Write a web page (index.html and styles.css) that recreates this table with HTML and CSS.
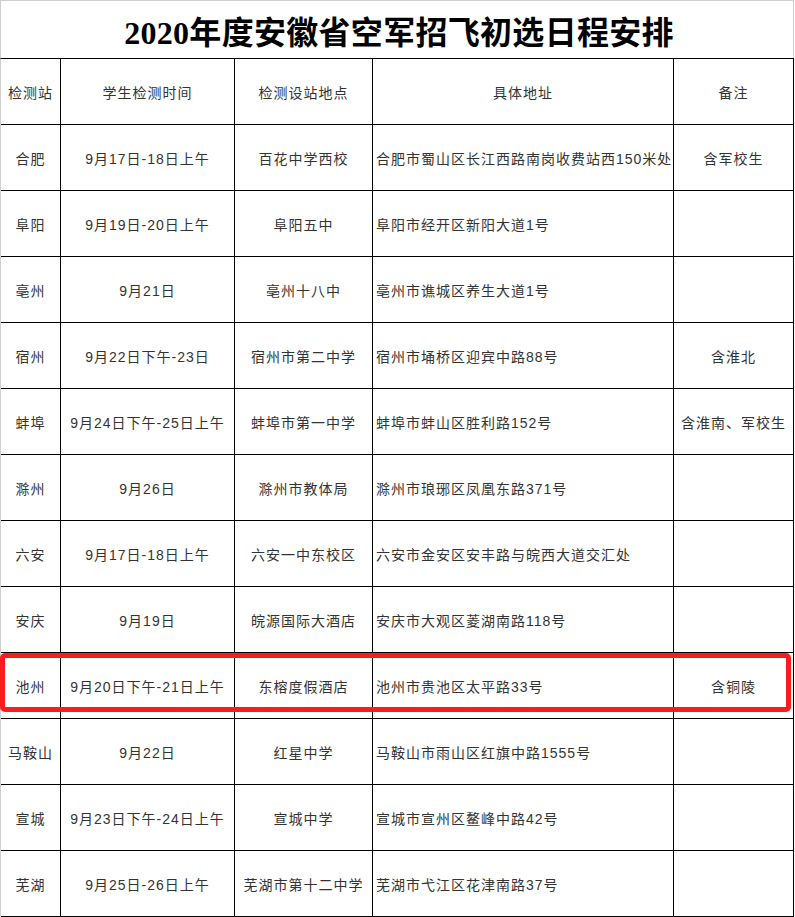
FILE: index.html
```html
<!DOCTYPE html>
<html lang="zh-CN">
<head>
<meta charset="utf-8">
<title>2020年度安徽省空军招飞初选日程安排</title>
<link rel="stylesheet" href="styles.css">
</head>
<body>
<div class="sheet">
  <div class="title">2020年度安徽省空军招飞初选日程安排</div>
  <div class="grid">
    <div class="c">检测站</div><div class="c">学生检测时间</div><div class="c">检测设站地点</div><div class="c">具体地址</div><div class="c">备注</div>

    <div class="c">合肥</div><div class="c">9月17日-18日上午</div><div class="c">百花中学西校</div><div class="c addr">合肥市蜀山区长江西路南岗收费站西150米处</div><div class="c">含军校生</div>

    <div class="c">阜阳</div><div class="c">9月19日-20日上午</div><div class="c">阜阳五中</div><div class="c addr">阜阳市经开区新阳大道1号</div><div class="c"></div>

    <div class="c">亳州</div><div class="c">9月21日</div><div class="c">亳州十八中</div><div class="c addr">亳州市谯城区养生大道1号</div><div class="c"></div>

    <div class="c">宿州</div><div class="c">9月22日下午-23日</div><div class="c">宿州市第二中学</div><div class="c addr">宿州市埇桥区迎宾中路88号</div><div class="c">含淮北</div>

    <div class="c">蚌埠</div><div class="c">9月24日下午-25日上午</div><div class="c">蚌埠市第一中学</div><div class="c addr">蚌埠市蚌山区胜利路152号</div><div class="c">含淮南、军校生</div>

    <div class="c">滁州</div><div class="c">9月26日</div><div class="c">滁州市教体局</div><div class="c addr">滁州市琅琊区凤凰东路371号</div><div class="c"></div>

    <div class="c">六安</div><div class="c">9月17日-18日上午</div><div class="c">六安一中东校区</div><div class="c addr">六安市金安区安丰路与皖西大道交汇处</div><div class="c"></div>

    <div class="c">安庆</div><div class="c">9月19日</div><div class="c">皖源国际大酒店</div><div class="c addr">安庆市大观区菱湖南路118号</div><div class="c"></div>

    <div class="c">池州</div><div class="c">9月20日下午-21日上午</div><div class="c">东榕度假酒店</div><div class="c addr">池州市贵池区太平路33号</div><div class="c">含铜陵</div>

    <div class="c">马鞍山</div><div class="c">9月22日</div><div class="c">红星中学</div><div class="c addr">马鞍山市雨山区红旗中路1555号</div><div class="c"></div>

    <div class="c">宣城</div><div class="c">9月23日下午-24日上午</div><div class="c">宣城中学</div><div class="c addr">宣城市宣州区鳌峰中路42号</div><div class="c"></div>

    <div class="c">芜湖</div><div class="c">9月25日-26日上午</div><div class="c">芜湖市第十二中学</div><div class="c addr">芜湖市弋江区花津南路37号</div><div class="c"></div>
  </div>
  <div class="highlight"></div>
</div>
</body>
</html>
```

FILE: styles.css
```css
* { box-sizing: border-box; }
html, body { margin: 0; padding: 0; background: #fff; }
body {
  font-family: "Liberation Sans", "Noto Sans CJK SC", sans-serif;
  color: #333;
}
.sheet {
  position: relative;
  width: 794px;
}
.title {
  height: 58px;
  border-top: 1px solid #cfcfcf;
  border-left: 1px solid #cfcfcf;
  border-right: 1px solid #cfcfcf;
  display: flex;
  align-items: center;
  justify-content: center;
  font-family: "Liberation Serif", "Noto Sans CJK SC", serif;
  font-weight: 700;
  font-size: 32px;
  color: #000;
  padding-top: 1px;
  padding-left: 4px;
  letter-spacing: 0.3px;
}
.grid {
  display: grid;
  grid-template-columns: 60px 174px 138px 301px 120px;
  grid-auto-rows: 66px;
  border-top: 1px solid #000;
  border-left: 1px solid #cfcfcf;
}
.c {
  border-right: 1px solid #000;
  border-bottom: 1px solid #000;
  display: flex;
  align-items: center;
  justify-content: center;
  font-size: 14px;
  letter-spacing: 1px;
  white-space: nowrap;
  padding-top: 1px;
}
.c.addr {
  justify-content: flex-start;
  padding-left: 3px;
}
.highlight {
  position: absolute;
  left: 0;
  top: 653px;
  width: 791px;
  height: 59px;
  border: 5px solid #fb1d1d;
  border-radius: 5px;
}
```
